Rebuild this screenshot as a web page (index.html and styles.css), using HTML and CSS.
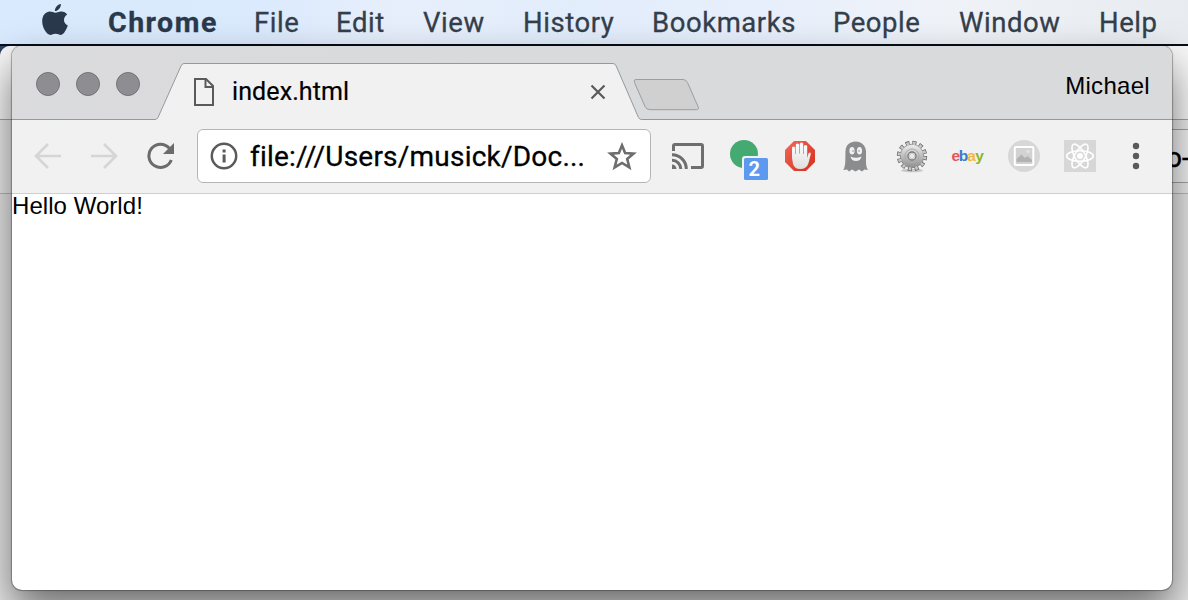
FILE: index.html
```html
<!DOCTYPE html>
<html lang="en">
<head>
<meta charset="utf-8">
<title>index.html</title>
<link rel="stylesheet" href="styles.css">
</head>
<body>
<div class="desktop">
  <nav class="menubar">
    <svg class="apple" width="26" height="32" viewBox="0 0 26 32"><path fill="#2a394b" d="M13.200 8.800C15 8.800 16.500 7.400 19.500 7.500C21.800 7.600 23.900 8.700 25.100 10.500C20.600 13.300 21.200 19.600 25.800 21.500C24.700 24.600 22 30.900 18.900 30.900C17 30.900 16.200 29.700 13.600 29.700C11 29.700 10.200 30.900 8.400 30.900C4.800 30.800 0.200 24 0.200 17.300C0.200 11 4.100 7.600 7.900 7.600C10.300 7.600 11.900 8.800 13.200 8.800ZM12.900 7.100C12.700 3.700 15.600 0.500 18.900 0C19.200 3.500 16.100 7.100 12.900 7.100Z"/></svg>
    <span class="m-chrome">Chrome</span><span class="m-file">File</span><span class="m-edit">Edit</span><span class="m-view">View</span><span class="m-history">History</span><span class="m-bookmarks">Bookmarks</span><span class="m-people">People</span><span class="m-window">Window</span><span class="m-help">Help</span>
  </nav>
  <div class="workspace">
    <div class="back-window">
      <div class="back-tabs"></div>
      <div class="back-toolbar"><div class="back-field">o-</div></div>
      <div class="back-page"></div>
    </div>
    <main class="window">
      <header class="tabstrip">
        <svg class="tab-shape" width="1160" height="75" viewBox="0 0 1160 75">
          <path fill="#f1f1f1" d="M0 75V73.500H143Q145 73.500 146 71.500L169 20Q170.200 17.500 172 17.500H601Q603 17.500 604.200 20L626.500 71.500Q627.500 73.500 629.500 73.500H1160V75Z"/>
          <path fill="none" stroke="#979899" d="M0 73.500H143Q145 73.500 146 71.500L169 20Q170.200 17.500 172 17.500H601Q603 17.500 604.200 20L626.500 71.500Q627.500 73.500 629.500 73.500H1160"/>
          <path fill="#d0d0d0" stroke="#9c9d9e" d="M624 33.500H671Q674 33.500 675.500 36.500L686 60.500Q687.500 63.700 684.500 63.700H638Q634.500 63.700 633 60.500L622.500 36.500Q621.300 33.500 624 33.500Z"/>
        </svg>
        <div class="lights"><i></i><i></i><i></i></div>
        <svg class="page-icon" width="20" height="28" viewBox="0 0 20 28" fill="none" stroke="#5a5a5a" stroke-width="2"><path d="M1 1H12L19 8V27H1Z"/><path d="M11.500 1V9H19"/></svg>
        <span class="tab-title">index.html</span>
        <svg class="close" width="16" height="16" viewBox="0 0 16 16" stroke="#5a5a5a" stroke-width="2.200"><path d="M1.500 1.500L14.500 14.500M14.500 1.500L1.500 14.500"/></svg>
        <span class="profile">Michael</span>
      </header>
      <div class="toolbar">
        <svg class="back" width="28" height="26" viewBox="0 0 28 26" fill="none" stroke="#d5d5d5" stroke-width="2.600"><path d="M27 13H2M14 1L2 13L14 25"/></svg>
        <svg class="forward" width="28" height="26" viewBox="0 0 28 26" fill="none" stroke="#d5d5d5" stroke-width="2.600"><path d="M0 13H25M13 1L25 13L13 25"/></svg>
        <svg class="reload" width="28" height="28" viewBox="0 0 28 28"><path fill="none" stroke="#6b6b6b" stroke-width="3" d="M22.300 6.200A11.600 11.600 0 1 0 24.300 18"/><path fill="#6b6b6b" d="M27 1V12H16Z"/></svg>
        <div class="omnibox">
          <svg class="info" width="28" height="28" viewBox="0 0 28 28"><circle cx="14" cy="14" r="12.200" fill="none" stroke="#5a5a5a" stroke-width="2.500"/><path fill="#5a5a5a" d="M12.600 7.500h3v3h-3zM12.600 12.500h3v8h-3z"/></svg>
          <span class="url">file:///Users/musick/Doc...</span>
          <svg class="star" width="30" height="29" viewBox="0 0 30 29"><path fill="none" stroke="#6e6e6e" stroke-width="2.600" d="M15 3.300L18.100 11L26.600 11.600L20.200 17L22.400 25.400L15 20.900L7.600 25.400L9.800 17L3.400 11.600L11.900 11Z"/></svg>
        </div>
        <svg class="extensions" width="480" height="52" viewBox="668 132 480 52">
          <defs>
            <linearGradient id="red" x2="1" y2="1"><stop stop-color="#f0695a"/><stop offset="1" stop-color="#d52d1b"/></linearGradient>
            <linearGradient id="hand" x2="0" y2="1"><stop stop-color="#fff"/><stop offset="1" stop-color="#dedede"/></linearGradient>
            <linearGradient id="metal" x2="0" y2="1"><stop stop-color="#efefef"/><stop offset=".5" stop-color="#bebebe"/><stop offset="1" stop-color="#8e8e8e"/></linearGradient>
          </defs>
          <g fill="none" stroke="#6e6e6e" stroke-width="3">
            <path d="M673.500 151V146Q673.500 144.500 675 144.500H701Q702.500 144.500 702.500 146V166Q702.500 167.500 701 167.500H691"/>
            <path d="M672 154.800A14.200 14.200 0 0 1 686.300 169M672 160.300A8.700 8.700 0 0 1 680.800 169"/>
            <path fill="#6e6e6e" stroke="none" d="M672 164.500A4.500 4.500 0 0 1 676.500 169H672Z"/>
          </g>
          <circle cx="744" cy="154" r="14" fill="#45a972"/>
          <rect x="742" y="156" width="28" height="26" rx="3" fill="#f1f1f1"/>
          <rect x="744" y="158" width="24" height="22" rx="1.500" fill="#5e99f0"/>
          <text class="badge" x="748.500" y="176">2</text>
          <path fill="url(#red)" d="M794 141H806L815 150V162L806 171H794L785 162V150Z"/>
          <path fill="url(#hand)" d="M792 158V147.500Q793.500 145.500 795.200 147.500V154H795.800V144.500Q797.400 142.500 799.200 144.500V153.500H799.800V143.500Q801.500 141.500 803.200 143.500V154H803.800V146Q805.500 144 807.200 146V158L808.500 153.500Q810.500 151.500 810.800 154L808.500 163Q806.800 169 800 169Q794.500 169 793 164Z"/>
          <path fill="#8b8c8e" d="M843.300 170C846 166 845.200 158 845.500 151C845.800 145 850 141.500 855.500 141.500C861.500 141.500 865.500 145.500 866 151C866.400 158 865 166 868 170L864.500 169.500L862 171.500L859 169.500L855.500 171.500L852 169.500L849 171.500L847 169.500Z"/>
          <g fill="#f1f1f1"><ellipse cx="852" cy="150.800" rx="2.600" ry="3.800"/><ellipse cx="859.500" cy="150.800" rx="2.600" ry="3.800"/><path d="M850.500 156.500Q856 159 861.500 156.500Q860.500 161 856 161T850.500 156.500Z"/></g>
          <g fill="#777"><circle cx="853" cy="151" r=".7"/><circle cx="859" cy="151" r=".7"/></g>
          <ellipse cx="912" cy="170.500" rx="11" ry="1.800" fill="#c8c8c8"/>
          <circle cx="912" cy="156" r="12.900" fill="none" stroke="#666" stroke-width="4.600" stroke-dasharray="3.900 2.854"/>
          <circle cx="912" cy="156" r="11.800" fill="url(#metal)" stroke="#777" stroke-width=".7"/>
          <circle cx="912" cy="156" r="12.900" fill="none" stroke="#c6c6c6" stroke-width="3.200" stroke-dasharray="2.600 4.154" stroke-dashoffset="-.65"/>
          <circle cx="912" cy="156" r="7" fill="none" stroke="#aaa" stroke-width="1"/>
          <circle cx="912" cy="156" r="4" fill="#f4f4f4" stroke="#777" stroke-width="1.300"/>
          <circle cx="912" cy="156" r="2.600" fill="#ececec" stroke="#aaa" stroke-width=".6"/>
          <text class="ebay" y="161"><tspan x="951.500" fill="#e2555a">e</tspan><tspan x="958.800" fill="#347bd2">b</tspan><tspan x="967.300" fill="#f3b73f">a</tspan><tspan x="975.300" fill="#86b827">y</tspan></text>
          <circle cx="1024" cy="156" r="16" fill="#d7d7d7"/>
          <rect x="1014.800" y="147" width="18.500" height="18" rx="1" fill="#d2d2d2" stroke="#fff" stroke-width="2"/>
          <path fill="#b2b2b2" d="M1016.500 162V159L1021.500 154.500L1025 158L1027.500 156L1032 160V162Z"/><circle cx="1028" cy="151.500" r="1.800" fill="#e2e2e2"/>
          <rect x="1064" y="140" width="32" height="32" rx="1" fill="#d7d7d7"/>
          <g fill="none" stroke="#fff" stroke-width="1.600"><ellipse cx="1080" cy="156" rx="13.300" ry="5.200"/><ellipse cx="1080" cy="156" rx="13.300" ry="5.200" transform="rotate(60 1080 156)"/><ellipse cx="1080" cy="156" rx="13.300" ry="5.200" transform="rotate(120 1080 156)"/></g><circle cx="1080" cy="156" r="3" fill="#fff"/>
          <g fill="#5a5a5a"><circle cx="1136" cy="146" r="3.200"/><circle cx="1136" cy="156" r="3.200"/><circle cx="1136" cy="166" r="3.200"/></g>
        </svg>
      </div>
      <div class="page">Hello World!</div>
    </main>
  </div>
</div>
</body>
</html>
```
FILE: styles.css
```css
* { box-sizing: border-box; }
body { margin: 0; }
.desktop { width: 1188px; height: 600px; overflow: hidden; display: flex; flex-direction: column; background: #2d4466; }
.menubar {
  height: 46px; flex: none; display: grid;
  grid-template-columns: 66px 146px 82px 87px 100px 129px 181px 126px 140px 80px;
  padding-left: 42px; line-height: 45px; color: #353f4b;
  font-family: Roboto, sans-serif; font-size: 27.5px; letter-spacing: .55px; white-space: nowrap;
  -webkit-text-stroke: .3px currentColor;
  background: linear-gradient(90deg, #d9eafe, #dbeafd 22%, #e8effb 34%, #e2edfb 48%, #e8effc 65%, #eff3f8 80%, #e8ecf0);
  border-bottom: 2px solid #080f1b;
}
.apple { margin-top: 4px; }
.m-chrome { font-weight: 700; font-size: 28.5px; letter-spacing: 1.5px; color: #2a394b; }
.workspace { flex: 1; position: relative; }
.back-window { height: 700px; display: flex; flex-direction: column; border-radius: 10px 0 0; overflow: hidden; background: #d9d9d9; }
.back-tabs { height: 74px; background: #f8f8f8; border-bottom: 1px solid #a5a5a5; }
.back-toolbar { height: 74px; background: #ededed; border-bottom: 1px solid #bbb; padding: 9px 0 10px 1100px; }
.back-field { height: 54px; border: solid #a5a5a5; border-width: 1px 0; background: #f4f4f4; padding-left: 66px; font: 28px/56px Roboto, sans-serif; white-space: nowrap; -webkit-text-stroke: .4px #000; }
.back-page { flex: 1; background: #e9e9e9; }
.window {
  position: absolute; left: 12px; top: 0; width: 1160px; height: 544px;
  display: flex; flex-direction: column; border-radius: 10px; overflow: hidden; background: #fff;
  box-shadow: 0 0 1px 1px rgba(0,0,0,.3), 0 20px 42px rgba(0,0,0,.54);
}
.tabstrip { height: 75px; flex: none; position: relative; display: flex; align-items: flex-start; background: linear-gradient(90deg, #dbdbdd, #d8dadc 40%, #d9dadb); }
.tab-shape { position: absolute; left: 0; top: 0; }
.lights { display: flex; gap: 16px; padding: 26px 0 0 24px; width: 182px; }
.lights i { width: 24px; height: 24px; border-radius: 50%; background: #8e8d92; border: 1px solid #747378; }
.page-icon, .tab-title, .close, .profile { position: relative; flex: none; }
.page-icon { margin-top: 32px; }
.tab-title { width: 376px; padding-left: 18px; line-height: 32px; margin-top: 30px; font-family: Roboto, sans-serif; font-size: 25px; letter-spacing: .1px; -webkit-text-stroke: .2px #000; }
.close { margin-top: 38px; }
.profile { margin: 24px 22px 0 auto; font: 24px/32px "Liberation Sans", sans-serif; letter-spacing: .3px; }
.toolbar { height: 73px; flex: none; display: flex; align-items: flex-start; background: #f1f1f1; border-bottom: 1px solid #cfcfcf; }
.back { margin: 22px 0 0 22px; }
.forward { margin: 22px 0 0 29px; }
.reload { margin: 21px 0 0 28px; }
.omnibox { width: 454px; height: 54px; margin: 8px 0 0 22px; display: flex; align-items: center; background: #fff; border: 1px solid #b5b5b5; border-radius: 6px; padding-left: 12px; }
.info, .star { flex: none; }
.url { flex: none; width: 369px; padding-left: 12px; font: 28px/52px Roboto, sans-serif; letter-spacing: .22px; padding-top: 2px; white-space: nowrap; -webkit-text-stroke: .3px #000; }
.extensions { margin: 11px 0 0 17px; }
.badge { font: 700 20px Roboto, sans-serif; fill: #fff; }
.ebay { font: 700 15.500px "Liberation Sans", sans-serif; }
.page { padding-left: 0; font: 24px/24px "Liberation Sans", sans-serif; letter-spacing: .05px; color: #000; }
```
